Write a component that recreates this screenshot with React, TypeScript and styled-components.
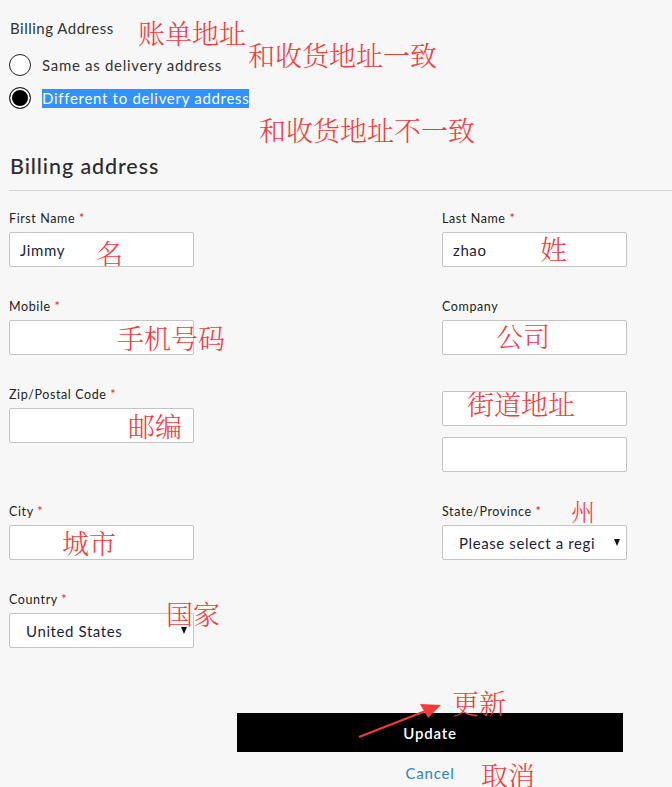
import React from "react";
import styled, { createGlobalStyle } from "styled-components";

const GlobalStyle = createGlobalStyle`
  html, body {
    margin: 0;
    padding: 0;
    background: #f7f7f7;
  }
  body {
    font-family: Lato, "Open Sans", "Noto Sans", sans-serif;
    color: #2b2b2b;
  }
`;

const Page = styled.div`
  position: relative;
  width: 672px;
  height: 787px;
  overflow: hidden;
  background: #f7f7f7;
`;

const Intro = styled.div`
  padding: 18px 0 0 9px;
`;

const IntroLabel = styled.div`
  font-size: 15px;
  line-height: 20px;
  color: #333;
  padding-left: 1px;
  letter-spacing: 0.5px;
`;

const RadioList = styled.div`
  display: flex;
  flex-direction: column;
  gap: 11px;
  margin-top: 16px;
`;

const RadioRow = styled.label`
  display: flex;
  align-items: center;
  gap: 11px;
  height: 22px;
  font-size: 15px;
  letter-spacing: 0.7px;
  color: #333;
`;

const RadioDot = styled.span<{ $checked?: boolean }>`
  box-sizing: border-box;
  width: 22px;
  height: 22px;
  border-radius: 50%;
  border: 1.5px solid #222;
  background: ${(p) => (p.$checked ? "#000" : "#fff")};
  box-shadow: ${(p) => (p.$checked ? "inset 0 0 0 2px #fff" : "none")};
`;

const RadioText = styled.span<{ $selected?: boolean }>`
  line-height: 19px;
  background: ${(p) => (p.$selected ? "#3390ff" : "transparent")};
  color: ${(p) => (p.$selected ? "#fff" : "#333")};
`;

const Heading = styled.h2`
  margin: 44px 0 0 0;
  padding-left: 10px;
  font-size: 21.5px;
  font-weight: 500;
  line-height: 26px;
  color: #2b2b2b;
  letter-spacing: 0.9px;
`;

const Rule = styled.hr`
  margin: 11px 0 0 9px;
  border: none;
  border-top: 1px solid #d4d4d4;
`;

const FormGrid = styled.div`
  display: grid;
  grid-template-columns: 185px 185px;
  justify-content: space-between;
  row-gap: 33px;
  padding: 21px 45px 0 9px;
`;

const Field = styled.div<{ $pad?: number }>`
  display: flex;
  flex-direction: column;
  gap: 8px;
  padding-top: ${(p) => p.$pad ?? 0}px;
`;

const Street = styled(Field)`
  gap: 11px;
`;

const LabelBox = styled.div`
  height: 12px;
`;

const Label = styled.div`
  font-size: 12.5px;
  line-height: 14px;
  letter-spacing: 0.6px;
  color: #222;
  white-space: nowrap;
`;

const Star = styled.span`
  color: #e0242a;
`;

const Box = styled.div<{ $indent?: number }>`
  box-sizing: border-box;
  height: 35px;
  width: 185px;
  background: #fff;
  border: 1px solid #c4c4c4;
  border-radius: 2px;
  display: flex;
  align-items: center;
  padding-left: ${(p) => p.$indent ?? 10}px;
  font-size: 15px;
  letter-spacing: 0.6px;
  color: #1c1c3c;
  position: relative;
  overflow: hidden;
  white-space: nowrap;
`;

const SelectText = styled.span<{ $clip?: number }>`
  display: block;
  overflow: hidden;
  max-width: ${(p) => p.$clip ?? 200}px;
`;

const Caret = styled.span`
  position: absolute;
  right: 6px;
  top: 13px;
  width: 0;
  height: 0;
  border-left: 3.5px solid transparent;
  border-right: 3.5px solid transparent;
  border-top: 7px solid #111;
`;

const Actions = styled.div`
  display: flex;
  flex-direction: column;
  align-items: flex-end;
  padding: 65px 49px 0 0;
`;

const ActionCol = styled.div`
  width: 386px;
  display: flex;
  flex-direction: column;
  align-items: center;
`;

const UpdateButton = styled.button`
  width: 386px;
  height: 39px;
  border: none;
  background: #000;
  color: #fff;
  font-family: Lato, "Open Sans", sans-serif;
  font-size: 15px;
  font-weight: 600;
  letter-spacing: 0.8px;
`;

const CancelLink = styled.a`
  margin-top: 12px;
  font-size: 15px;
  color: #2f7fc8;
  letter-spacing: 0.8px;
  text-decoration: none;
`;

const Note = styled.span<{ $x: number; $y: number; $size?: number }>`
  position: absolute;
  left: ${(p) => p.$x}px;
  top: ${(p) => p.$y}px;
  font-family: "Noto Serif CJK SC", "Noto Sans CJK SC", serif;
  font-weight: 300;
  font-size: ${(p) => p.$size ?? 27}px;
  line-height: 1;
  color: #f23b3b;
  white-space: nowrap;
  pointer-events: none;
`;

const ArrowLayer = styled.svg`
  position: absolute;
  left: 0;
  top: 0;
  pointer-events: none;
`;

type NoteItem = { text: string; x: number; y: number; size?: number };

const notes: NoteItem[] = [
  { text: "账单地址", x: 138, y: 19 },
  { text: "和收货地址一致", x: 248, y: 41 },
  { text: "和收货地址不一致", x: 259, y: 116 },
  { text: "名", x: 96, y: 239 },
  { text: "姓", x: 540, y: 235 },
  { text: "手机号码", x: 117, y: 324 },
  { text: "公司", x: 496, y: 322 },
  { text: "街道地址", x: 467, y: 390 },
  { text: "邮编", x: 128, y: 412 },
  { text: "城市", x: 62, y: 529 },
  { text: "州", x: 571, y: 499, size: 24 },
  { text: "国家", x: 166, y: 600 },
  { text: "更新", x: 452, y: 689 },
  { text: "取消", x: 481, y: 761 },
];

const Req = ({ children }: { children: React.ReactNode }) => (
  <LabelBox>
    <Label>
      {children} <Star>*</Star>
    </Label>
  </LabelBox>
);

export default function App() {
  return (
    <Page>
      <GlobalStyle />
      <Intro>
        <IntroLabel>Billing Address</IntroLabel>
        <RadioList>
          <RadioRow>
            <RadioDot />
            <RadioText>Same as delivery address</RadioText>
          </RadioRow>
          <RadioRow>
            <RadioDot $checked />
            <RadioText $selected>Different to delivery address</RadioText>
          </RadioRow>
        </RadioList>
      </Intro>

      <Heading>Billing address</Heading>
      <Rule />

      <FormGrid>
        <Field>
          <Req>First Name</Req>
          <Box>Jimmy</Box>
        </Field>
        <Field>
          <Req>Last Name</Req>
          <Box>zhao</Box>
        </Field>

        <Field>
          <Req>Mobile</Req>
          <Box />
        </Field>
        <Field>
          <LabelBox>
            <Label>Company</Label>
          </LabelBox>
          <Box />
        </Field>

        <Field>
          <Req>Zip/Postal Code</Req>
          <Box />
        </Field>
        <Street $pad={3}>
          <Box />
          <Box />
        </Street>

        <Field>
          <Req>City</Req>
          <Box />
        </Field>
        <Field>
          <Req>State/Province</Req>
          <Box $indent={16}>
            <SelectText $clip={136}>Please select a region</SelectText>
            <Caret />
          </Box>
        </Field>

        <Field>
          <Req>Country</Req>
          <Box $indent={16}>
            <SelectText>United States</SelectText>
            <Caret />
          </Box>
        </Field>
      </FormGrid>

      <Actions>
        <ActionCol>
          <UpdateButton>Update</UpdateButton>
          <CancelLink>Cancel</CancelLink>
        </ActionCol>
      </Actions>

      {notes.map((n) => (
        <Note key={n.text} $x={n.x} $y={n.y} $size={n.size}>
          {n.text}
        </Note>
      ))}

      <ArrowLayer width="672" height="787" viewBox="0 0 672 787">
        <line x1="359" y1="737" x2="428" y2="710" stroke="#f23b3b" strokeWidth="2" />
        <polygon points="441,705 420,704 428,718" fill="#f23b3b" />
      </ArrowLayer>
    </Page>
  );
}
